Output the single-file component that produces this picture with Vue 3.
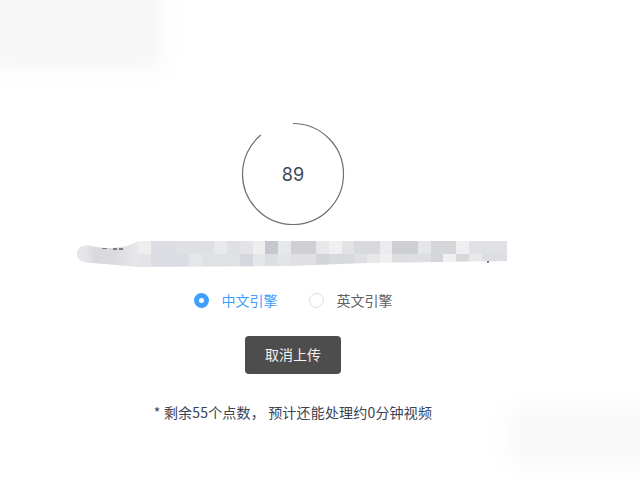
<script setup>
const topRow = ['eeeeef','dcdde2','dcdde2','dfe0e4','dfe0e4','dfe0e4','e8e9ec','dfe0e4','e3e4e8','eeeef1','c4c7cd','e6e7ea','cfd0d4','cfd0d4','e8e8ea','f0f0f0','e2e3e5','d8d9dc','d8d9dc','ececee','cdcfd3','cdcfd3','e5e6e8','d5d6da','d5d6da','efeff0','e0e1e4','e0e1e4','e0e1e4']
const bottomRow = ['e5e5e9','dcdde2','dcdde2','dcdde2','e6e7ea','e0e1e5','e0e1e5','e0e1e5','d5d7dc','e5e6e9','dddee3','e3e4e8','e0e0e3','e0e0e3','d3d4d8','d8d9dc','d8d9dc','dfe0e2','e8e8ea','f0f0f0','dddee1','dddee1','dddee1','d5d6d9','f0f0f1','d8d9dc','e8e8ea','dddee2','dddee2']
const cells = [...topRow, ...bottomRow].map((c) => '#' + c)
const progress = 89
</script>

<template>
  <div class="page">
    <div class="smudge smudge-top"></div>
    <div class="smudge smudge-bottom"></div>

    <div class="ring">
      <svg class="ring-svg" width="104" height="104" viewBox="0 0 104 104">
        <circle class="ring-arc" cx="52" cy="52" r="50.5" pathLength="100" :stroke-dasharray="`${progress} ${100 - progress}`" />
      </svg>
      <span class="ring-value">{{ progress }}</span>
    </div>

    <div class="masked">
      <div class="pill">
        <i class="speck s1"></i><i class="speck s2"></i><i class="speck s3"></i>
      </div>
      <div class="mosaic-wrap">
        <div class="mosaic">
          <span v-for="(c, i) in cells" :key="i" :style="{ background: c }"></span>
        </div>
        <i class="speck s4"></i>
      </div>
    </div>

    <div class="radios">
      <label class="radio active"><span class="dot"></span><span>中文引擎</span></label>
      <label class="radio"><span class="dot"></span><span>英文引擎</span></label>
    </div>

    <button class="cancel" type="button">取消上传</button>

    <p class="note">* 剩余55个点数， 预计还能处理约0分钟视频</p>
  </div>
</template>

<style scoped>
.page {
  position: relative;
  width: 640px;
  height: 480px;
  overflow: hidden;
  background: #fff;
  display: flex;
  flex-direction: column;
  align-items: center;
  padding: 122px 54px 0 0;
  box-sizing: border-box;
  font-family: "Noto Sans CJK SC", "Liberation Sans", sans-serif;
}
.smudge {
  position: absolute;
  background: #f6f6f6;
  filter: blur(10px);
}
.smudge-top {
  left: -10px;
  top: -14px;
  width: 172px;
  height: 82px;
}
.smudge-bottom {
  left: 510px;
  top: 408px;
  width: 160px;
  height: 56px;
  background: #f8f8f8;
}
.ring {
  position: relative;
  width: 104px;
  height: 104px;
  display: flex;
  align-items: center;
  justify-content: center;
}
.ring-svg {
  position: absolute;
  inset: 0;
  transform: rotate(-90deg);
}
.ring-arc {
  fill: none;
  stroke: #707070;
  stroke-width: 1.2;
}
.ring-value {
  font-family: "Inter", "Liberation Sans", sans-serif;
  font-size: 18px;
  color: #3c4759;
}
.masked {
  display: flex;
  width: 430px;
  height: 26px;
  margin: 15px 2px 0 0;
}
.pill {
  position: relative;
  width: 61px;
  height: 26px;
  clip-path: path("M0,13 C0,7 4,4.5 10,4.5 C16,4.5 20,7 30,7 C45,7 52,5 61,0 L61,26 C40,24 25,23 10,21.5 C4,21 0,18 0,13 Z");
  background: linear-gradient(90deg, #e7e7ea 0%, #e4e4e7 15%, #d9d9dd 30%, #dcdce0 65%, #e8e8ec 100%);
}
.mosaic-wrap {
  position: relative;
  width: 369px;
}
.mosaic {
  display: grid;
  grid-template-columns: repeat(29, 1fr);
  grid-template-rows: 13px 13px;
  height: 26px;
  clip-path: polygon(0 0, 100% 0, 100% 20px, 62% 22px, 41% 25px, 0 26px);
  filter: blur(0.4px);
}
.speck {
  position: absolute;
  height: 2px;
  background: #7c7c81;
  filter: blur(0.5px);
}
.s1 { left: 25px; top: 6px; width: 5px; }
.s2 { left: 36px; top: 7px; width: 4px; }
.s3 { left: 42px; top: 7px; width: 4px; }
.s4 { left: 349px; top: 20px; width: 2px; }
.radios {
  display: flex;
  gap: 31px;
  margin-top: 23px;
  height: 20px;
}
.radio {
  display: flex;
  align-items: center;
  gap: 13px;
  font-size: 14px;
  color: #606266;
}
.radio.active {
  color: #409eff;
}
.dot {
  width: 15px;
  height: 15px;
  box-sizing: border-box;
  border: 1px solid #dcdfe6;
  border-radius: 50%;
  background: #fff;
}
.active .dot {
  border: 5px solid #409eff;
}
.cancel {
  width: 96px;
  height: 38px;
  margin-top: 26px;
  padding: 0 0 2px;
  border: none;
  border-radius: 4px;
  background: #4d4d4d;
  color: #f2f2f2;
  font: inherit;
  font-size: 14px;
}
.note {
  margin: 28px 0 0;
  font-size: 14px;
  line-height: 20px;
  letter-spacing: 0.18px;
  color: #3a4354;
}
</style>
